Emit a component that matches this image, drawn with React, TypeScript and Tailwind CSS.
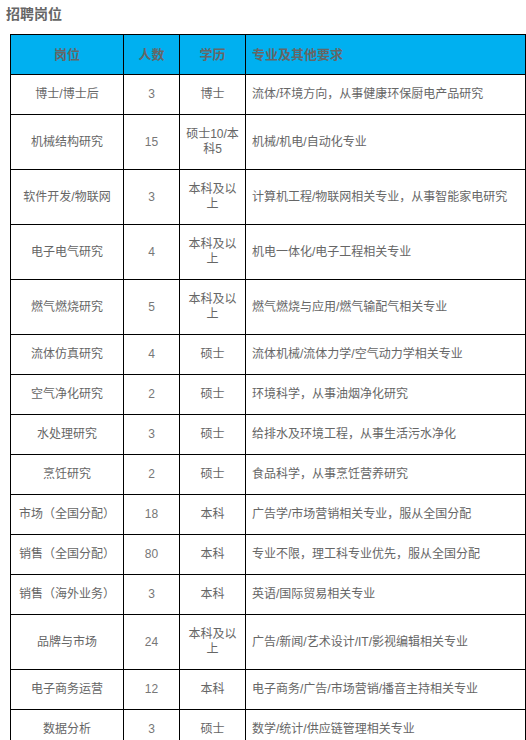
type Job = {
  title: string;
  count: string;
  degree: string;
  req: string;
};

const jobs: Job[] = [
  { title: "博士/博士后", count: "3", degree: "博士", req: "流体/环境方向，从事健康环保厨电产品研究" },
  { title: "机械结构研究", count: "15", degree: "硕士10/本科5", req: "机械/机电/自动化专业" },
  { title: "软件开发/物联网", count: "3", degree: "本科及以上", req: "计算机工程/物联网相关专业，从事智能家电研究" },
  { title: "电子电气研究", count: "4", degree: "本科及以上", req: "机电一体化/电子工程相关专业" },
  { title: "燃气燃烧研究", count: "5", degree: "本科及以上", req: "燃气燃烧与应用/燃气输配气相关专业" },
  { title: "流体仿真研究", count: "4", degree: "硕士", req: "流体机械/流体力学/空气动力学相关专业" },
  { title: "空气净化研究", count: "2", degree: "硕士", req: "环境科学，从事油烟净化研究" },
  { title: "水处理研究", count: "3", degree: "硕士", req: "给排水及环境工程，从事生活污水净化" },
  { title: "烹饪研究", count: "2", degree: "硕士", req: "食品科学，从事烹饪营养研究" },
  { title: "市场（全国分配）", count: "18", degree: "本科", req: "广告学/市场营销相关专业，服从全国分配" },
  { title: "销售（全国分配）", count: "80", degree: "本科", req: "专业不限，理工科专业优先，服从全国分配" },
  { title: "销售（海外业务）", count: "3", degree: "本科", req: "英语/国际贸易相关专业" },
  { title: "品牌与市场", count: "24", degree: "本科及以上", req: "广告/新闻/艺术设计/IT/影视编辑相关专业" },
  { title: "电子商务运营", count: "12", degree: "本科", req: "电子商务/广告/市场营销/播音主持相关专业" },
  { title: "数据分析", count: "3", degree: "硕士", req: "数学/统计/供应链管理相关专业" },
];

export default function App() {
  return (
    <div className="min-h-screen bg-white font-['Liberation_Sans','Noto_Sans_CJK_SC',sans-serif] text-[#666]">
      <h2 className="pl-[6px] pt-[4px] text-[14px] font-bold leading-[20px] text-[#666]">招聘岗位</h2>

      <table className="mt-[10px] ml-[10px] w-[516px] table-fixed border-collapse text-[12px] leading-[15px]">
        <colgroup>
          <col className="w-[113px]" />
          <col className="w-[56px]" />
          <col className="w-[66px]" />
          <col />
        </colgroup>
        <thead>
          <tr className="bg-[#00b0f0] text-[13px] font-bold">
            <th className="border border-black py-[12px] text-center">岗位</th>
            <th className="border border-black py-[12px] text-center">人数</th>
            <th className="border border-black py-[12px] text-center">学历</th>
            <th className="border border-black px-[6px] py-[12px] text-left">专业及其他要求</th>
          </tr>
        </thead>
        <tbody>
          {jobs.map((j) => (
            <tr key={j.title}>
              <td className="border border-black px-[5px] py-[12px] text-center">{j.title}</td>
              <td className="border border-black px-[5px] py-[12px] text-center text-[#777]">{j.count}</td>
              <td className="border border-black px-[5px] py-[12px] text-center">{j.degree}</td>
              <td className="border border-black px-[6px] py-[12px] text-left">{j.req}</td>
            </tr>
          ))}
        </tbody>
      </table>
    </div>
  );
}
